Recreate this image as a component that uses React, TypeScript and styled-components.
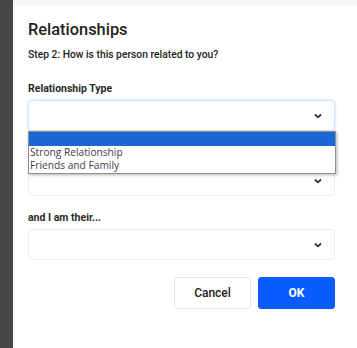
import React from "react";
import styled, { createGlobalStyle } from "styled-components";

const GlobalStyle = createGlobalStyle`
  html, body {
    margin: 0;
    padding: 0;
    background: #ffffff;
  }
  body {
    font-family: "Roboto", "Liberation Sans", sans-serif;
  }
`;

const Page = styled.div`
  display: flex;
  width: 357px;
  height: 348px;
  overflow: hidden;
`;

const SideStrip = styled.div`
  width: 13px;
  flex-shrink: 0;
  background: #474747;
`;

const Main = styled.div`
  flex: 1;
  display: flex;
  flex-direction: column;
  background: #ffffff;
`;

const TopBar = styled.div`
  height: 6px;
  background: #f6f6f6;
`;

const Dialog = styled.div`
  display: flex;
  flex-direction: column;
  padding: 13px 22px 0 15px;
`;

const Title = styled.h2`
  margin: 0;
  font-size: 16.4px;
  line-height: 22px;
  font-weight: 500;
  color: #1f1f1f;
`;

const Step = styled.p`
  margin: 7px 0 0;
  font-size: 10.3px;
  line-height: 14px;
  font-weight: 500;
  color: #222;
`;

const Field = styled.div<{ $top: number }>`
  position: relative;
  display: flex;
  flex-direction: column;
  margin-top: ${(p) => p.$top}px;
`;

const Label = styled.label`
  min-height: 14px;
  font-size: 10.5px;
  line-height: 14px;
  font-weight: 700;
  color: #2a2a2a;
  margin-bottom: 4px;
`;

const SelectBox = styled.div<{ $focused?: boolean }>`
  height: 31px;
  box-sizing: border-box;
  display: flex;
  align-items: center;
  justify-content: flex-end;
  padding-right: 12px;
  border-radius: 4px;
  border: 1px solid ${(p) => (p.$focused ? "#d6e4fb" : "#ececec")};
  box-shadow: ${(p) => (p.$focused ? "0 0 2px 1px #e3edfd" : "none")};
  background: #fff;
`;

const Chevron = () => (
  <svg width="8" height="6" viewBox="0 0 8 6">
    <path d="M1 1.5 L4 4.3 L7 1.5" fill="none" stroke="#333" strokeWidth="1.8" />
  </svg>
);

const OptionList = styled.ul`
  position: absolute;
  left: 0;
  right: -1px;
  top: 49px;
  margin: 0;
  padding: 0;
  list-style: none;
  background: #fff;
  border: 1px solid #8f8f8f;
  box-shadow: 1px 1px 3px rgba(0, 0, 0, 0.3);
  z-index: 2;
`;

const Option = styled.li<{ $active?: boolean }>`
  height: 13.5px;
  line-height: 13.5px;
  font-family: "Open Sans", "Liberation Sans", sans-serif;
  font-size: 10.2px;
  color: #403d48;
  padding-left: 1px;
  background: ${(p) => (p.$active ? "#1967d2" : "#fff")};
`;

const Actions = styled.div`
  display: flex;
  justify-content: flex-end;
  gap: 7px;
  margin-top: 17px;
`;

const Button = styled.button<{ $primary?: boolean }>`
  width: 77px;
  height: 32px;
  border-radius: 3px;
  font-family: "Roboto", "Liberation Sans", sans-serif;
  font-size: 12px;
  font-weight: ${(p) => (p.$primary ? 700 : 500)};
  cursor: pointer;
  border: 1px solid ${(p) => (p.$primary ? "#0b5cff" : "#e4e4e4")};
  background: ${(p) => (p.$primary ? "#0b5cff" : "#ffffff")};
  color: ${(p) => (p.$primary ? "#ffffff" : "#222")};
`;

const App = () => {
  return (
    <>
      <GlobalStyle />
      <Page>
        <SideStrip />
        <Main>
          <TopBar />
          <Dialog>
            <Title>Relationships</Title>
            <Step>Step 2: How is this person related to you?</Step>
            <Field $top={20}>
              <Label>Relationship Type</Label>
              <SelectBox $focused>
                <Chevron />
              </SelectBox>
              <OptionList>
                <Option $active />
                <Option>Strong Relationship</Option>
                <Option>Friends and Family</Option>
              </OptionList>
            </Field>
            {/* label of this field is hidden under the open list */}
            <Field $top={16}>
              <Label />
              <SelectBox>
                <Chevron />
              </SelectBox>
            </Field>
            <Field $top={15}>
              <Label>and I am their...</Label>
              <SelectBox>
                <Chevron />
              </SelectBox>
            </Field>
            <Actions>
              <Button>Cancel</Button>
              <Button $primary>OK</Button>
            </Actions>
          </Dialog>
        </Main>
      </Page>
    </>
  );
};

export default App;
